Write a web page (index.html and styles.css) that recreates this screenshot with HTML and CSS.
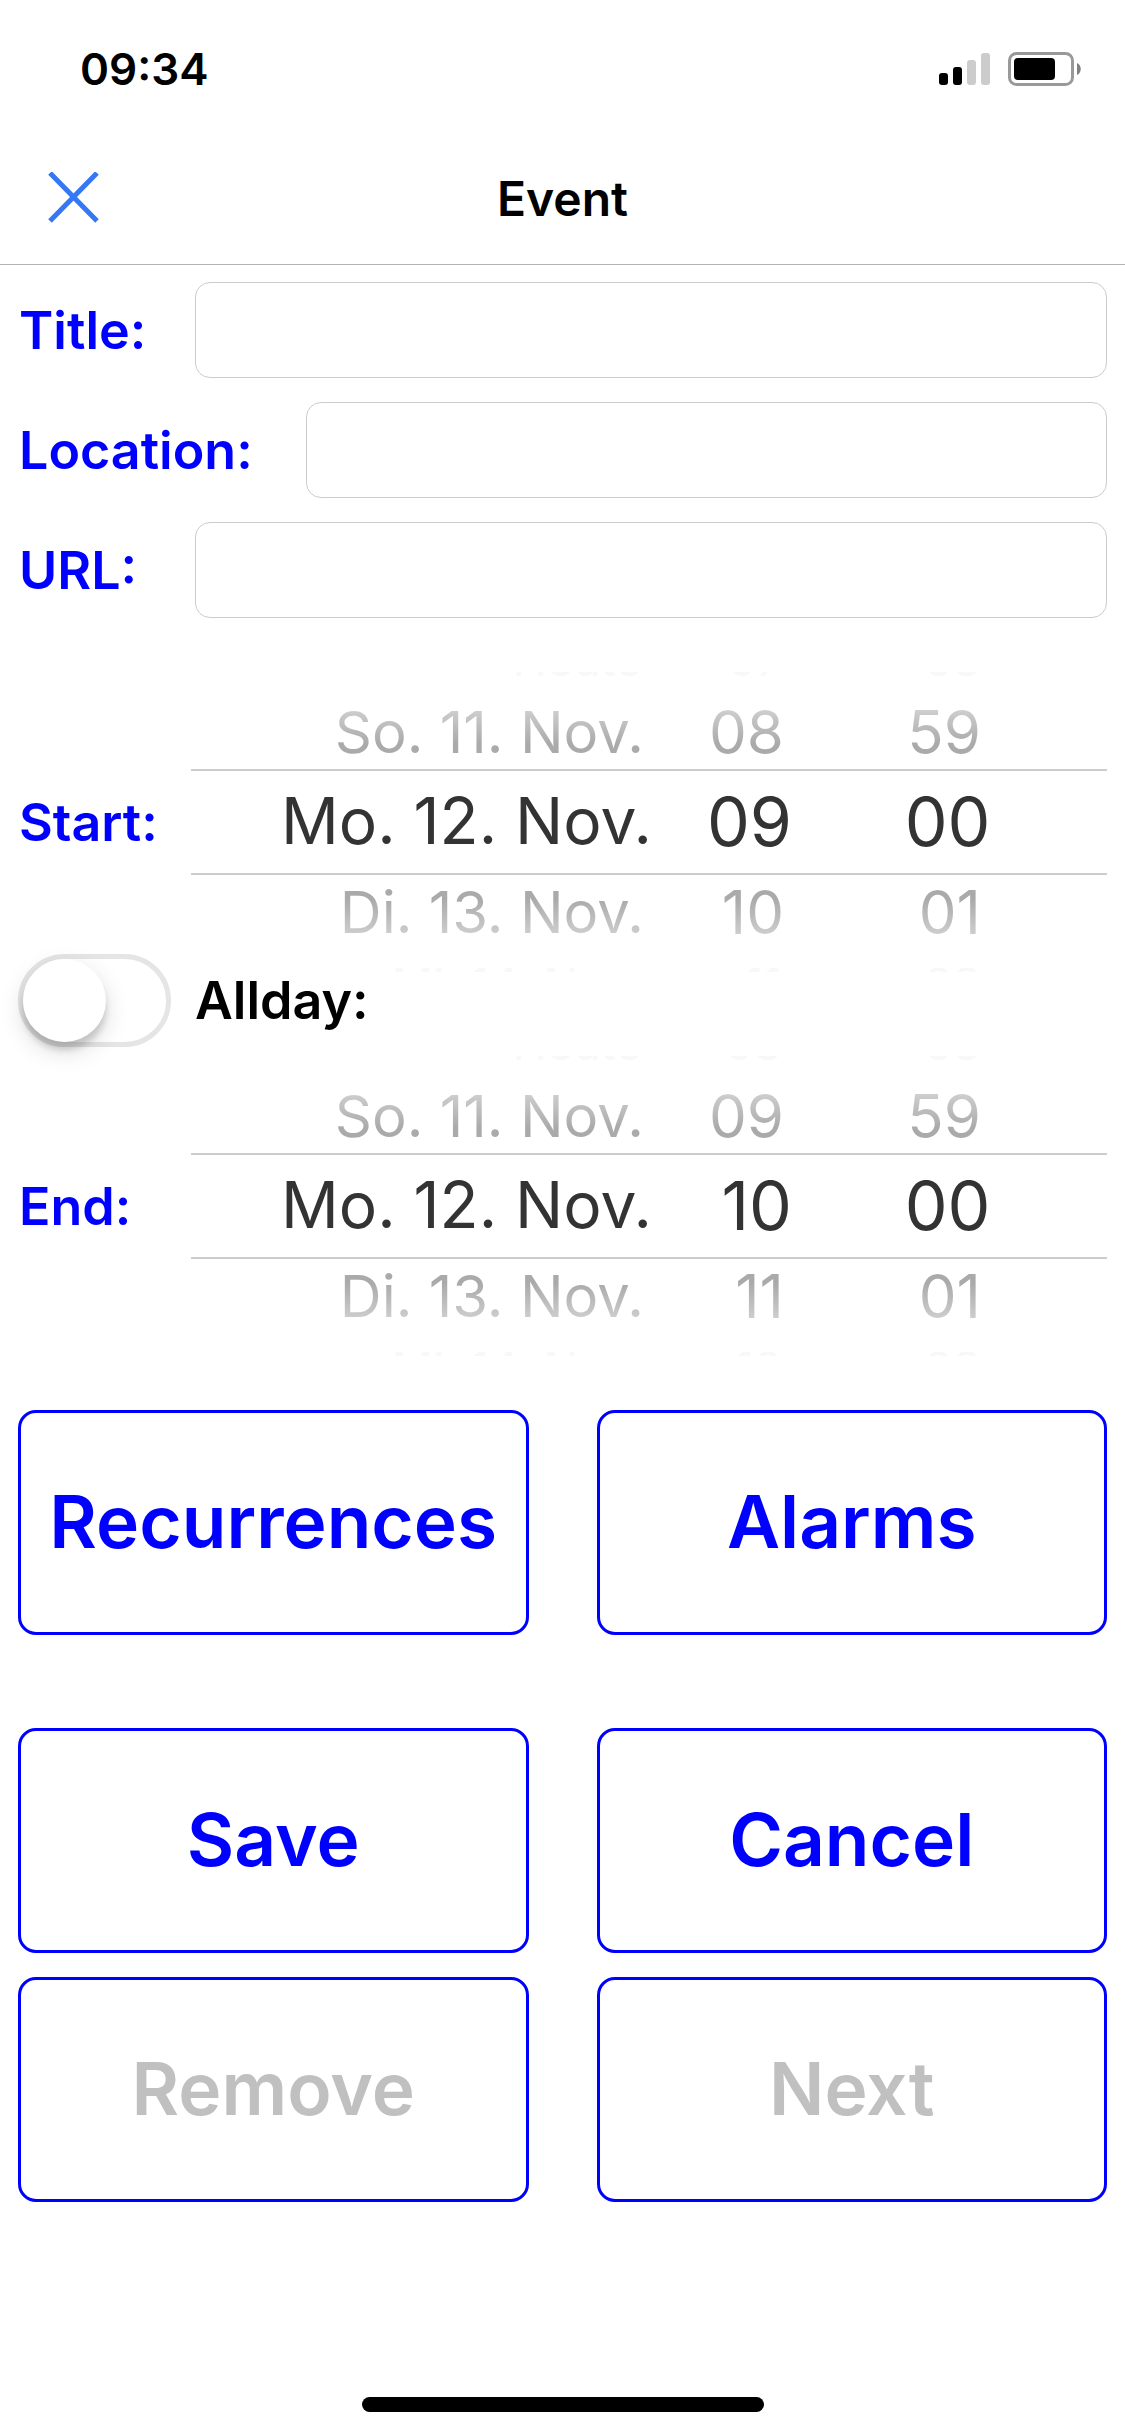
FILE: index.html
```html
<!DOCTYPE html>
<html lang="en">
<head>
<meta charset="utf-8">
<meta name="viewport" content="width=device-width, initial-scale=1">
<title>Event</title>
<link rel="stylesheet" href="styles.css">
</head>
<body>
<div class="status">
  <time class="clock">09:34</time>
  <svg class="indicators" viewBox="0 0 142 34" aria-hidden="true">
    <rect x="0" y="21" width="9" height="12" rx="3"/>
    <rect x="14" y="15" width="9" height="18" rx="3"/>
    <rect x="28" y="8" width="9" height="25" rx="3" fill="#ccc"/>
    <rect x="42" y="1" width="9" height="32" rx="3" fill="#ccc"/>
    <rect x="70.500" y="1.500" width="63" height="31" rx="7" fill="none" stroke="#999" stroke-width="3"/>
    <rect x="75" y="6" width="41" height="22" rx="4"/>
    <path d="M138 11c5 2 5 10 0 12z" fill="#808080"/>
  </svg>
</div>
<header class="navbar">
  <button class="close" type="button" aria-label="Close">
    <svg class="close-icon" viewBox="0 0 52 52" aria-hidden="true"><path d="M2 1 49 49M49 1 2 49" fill="none" stroke="#3478f6" stroke-width="5"/></svg>
  </button>
  <h1 class="heading">Event</h1>
</header>
<main>
<form class="form">
  <div class="fields">
    <div class="field"><label class="label" for="title">Title:</label><input class="box" id="title" type="text"></div>
    <div class="field"><label class="label label-wide" for="location">Location:</label><input class="box" id="location" type="text"></div>
    <div class="field"><label class="label" for="url">URL:</label><input class="box" id="url" type="url"></div>
  </div>

  <div class="when">
    <span class="label" id="start">Start:</span>
    <div class="wheel" role="group" aria-labelledby="start">
      <ul class="column column-date"><li class="edge edge-top">Heute</li><li class="near near-top">So. 11. Nov.</li><li class="chosen">Mo. 12. Nov.</li><li class="near near-bottom">Di. 13. Nov.</li><li class="edge edge-bottom">Mi. 14. Nov.</li></ul>
      <ul class="column"><li class="edge edge-top">07</li><li class="near near-top">08</li><li class="chosen">09</li><li class="near near-bottom">10</li><li class="edge edge-bottom">11</li></ul>
      <ul class="column column-minute"><li class="edge edge-top">58</li><li class="near near-top">59</li><li class="chosen">00</li><li class="near near-bottom">01</li><li class="edge edge-bottom">02</li></ul>
    </div>
  </div>

  <div class="allday">
    <input class="switch" id="allday" type="checkbox" role="switch">
    <label class="allday-label" for="allday">Allday:</label>
  </div>

  <div class="when">
    <span class="label" id="end">End:</span>
    <div class="wheel" role="group" aria-labelledby="end">
      <ul class="column column-date"><li class="edge edge-top">Heute</li><li class="near near-top">So. 11. Nov.</li><li class="chosen">Mo. 12. Nov.</li><li class="near near-bottom">Di. 13. Nov.</li><li class="edge edge-bottom">Mi. 14. Nov.</li></ul>
      <ul class="column"><li class="edge edge-top">08</li><li class="near near-top">09</li><li class="chosen">10</li><li class="near near-bottom">11</li><li class="edge edge-bottom">12</li></ul>
      <ul class="column column-minute"><li class="edge edge-top">58</li><li class="near near-top">59</li><li class="chosen">00</li><li class="near near-bottom">01</li><li class="edge edge-bottom">02</li></ul>
    </div>
  </div>

  <div class="actions">
    <button class="action" type="button">Recurrences</button>
    <button class="action" type="button">Alarms</button>
  </div>
  <div class="actions actions-last">
    <button class="action" type="submit">Save</button>
    <button class="action" type="button">Cancel</button>
    <button class="action" type="button" disabled>Remove</button>
    <button class="action" type="button" disabled>Next</button>
  </div>
</form>
</main>
<div class="home"></div>
</body>
</html>
```
FILE: styles.css
```css
* { box-sizing: border-box; }

body {
  margin: 0;
  min-height: 100vh;
  display: flex;
  flex-direction: column;
  background: #fff;
  color: #000;
  font-family: Inter, "Liberation Sans", sans-serif;
}

.status {
  display: flex;
  align-items: center;
  justify-content: space-between;
  height: 132px;
  padding: 6px 44px 0 80px;
}
.clock { font-size: 44px; font-weight: 600; }
.indicators { width: 142px; height: 34px; }

.navbar {
  display: grid;
  grid-template-columns: 1fr auto 1fr;
  align-items: center;
  height: 133px;
  padding: 0 48px;
  border-bottom: 1px solid #b2b2b2;
}
.close {
  justify-self: start;
  display: flex;
  padding: 0;
  border: 0;
  background: none;
}
.close-icon { width: 52px; height: 52px; }
.heading { margin: 0; font-size: 48px; font-weight: 600; }

.form { padding: 17px 18px 0; }

.fields { display: flex; flex-direction: column; gap: 24px; }
.field { display: flex; align-items: center; }
.label {
  flex: none;
  width: 177px;
  padding-left: 1px;
  color: #00f;
  font-size: 52px;
  font-weight: 600;
}
.label-wide { width: 288px; }
.box {
  flex: 1;
  min-width: 0;
  height: 96px;
  padding: 0 20px;
  border: 1px solid #ccc;
  border-radius: 15px;
  background: #fff;
  font: inherit;
  font-size: 52px;
}

.when { display: flex; align-items: center; }
.fields + .when { margin-top: 54px; }
.when .label { width: 173px; }
.wheel {
  flex: 1;
  display: grid;
  grid-template-columns: 461fr 140fr 315fr;
}
.column {
  margin: 0;
  padding: 0;
  list-style: none;
  text-align: right;
  white-space: nowrap;
}
.chosen {
  height: 106px;
  border: solid #ccc;
  border-width: 2px 0;
  color: #333;
  font-size: 68px;
  line-height: 100px;
}
.near {
  height: 93px;
  padding-right: 8px;
  background-clip: text;
  color: transparent;
  font-size: 60px;
  line-height: 74px;
}
.near-top { padding-top: 19px; background-image: linear-gradient(#fff 19px, #ccc 36px, #aaa 68px); }
.near-bottom { background-image: linear-gradient(#aaa 24px, #ccc 58px, #fff 74px); }
/* The rows beyond the neighbours show only a sliver at the rim of the wheel. */
.edge {
  display: flex;
  justify-content: flex-end;
  height: 4px;
  padding-right: 10px;
  overflow: hidden;
  color: #f8f8f8;
  font-size: 46px;
  line-height: 33px;
}
.edge-top { align-items: flex-end; }
.edge-bottom { align-items: flex-start; }
.column-date .chosen { font-size: 64px; }
.column-date .near { font-size: 58px; }
.column-minute .chosen { padding-right: 37%; }
.column-minute .near,
.column-minute .edge { padding-right: 40%; }

.allday {
  display: flex;
  align-items: center;
  gap: 24px;
  margin: -18px 0 9px;
}
.switch {
  appearance: none;
  display: flex;
  width: 153px;
  height: 93px;
  margin: 0;
  padding: 0;
  border: 5px solid #e5e5e5;
  border-radius: 47px;
  background: #fff;
}
.switch::before {
  content: "";
  width: 83px;
  height: 83px;
  border-radius: 50%;
  background: #fff;
  box-shadow: 0 9px 24px rgba(0, 0, 0, .15), 0 8px 6px rgba(0, 0, 0, .15);
}
.switch:checked { justify-content: flex-end; background: #4cd964; }
.allday-label { font-size: 52px; font-weight: 600; }

.actions {
  display: grid;
  grid-template-columns: 1fr 1fr;
  gap: 24px 68px;
  margin-top: 54px;
}
.actions-last { margin-top: 93px; }
.action {
  height: 225px;
  padding: 0 0 2px;
  border: 3px solid #00f;
  border-radius: 18px;
  background: #fff;
  color: #00f;
  font: 600 73px Inter, "Liberation Sans", sans-serif;
}
.action:disabled { color: #c0c0c0; }

.home {
  width: 402px;
  height: 15px;
  margin: auto auto 24px;
  border-radius: 8px;
  background: #000;
}
```
